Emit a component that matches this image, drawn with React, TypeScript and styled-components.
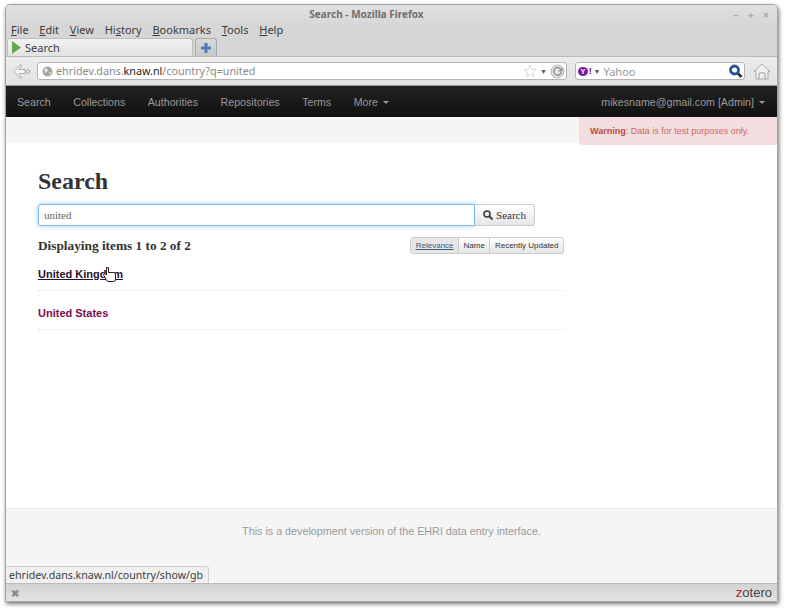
import { FC } from "react";
import styled, { createGlobalStyle } from "styled-components";

const GlobalStyle = createGlobalStyle`
  html, body {
    margin: 0;
    padding: 0;
    background: #fff;
    overflow: hidden;
  }
`;

const Page = styled.div`
  width: 785px;
  height: 610px;
  padding: 4px 0 0 5px;
  box-sizing: border-box;
`;

const Window = styled.div`
  width: 773px;
  height: 598px;
  box-sizing: border-box;
  display: flex;
  flex-direction: column;
  position: relative;
  background: #d6d6d6;
  border: 1px solid #a4a4a4;
  border-radius: 5px 5px 0 0;
  box-shadow: 1px 2px 4px rgba(0, 0, 0, 0.55);
  font-family: "Noto Sans", "Open Sans", sans-serif;
`;

const TitleBar = styled.div`
  height: 18px;
  flex: none;
  display: flex;
  align-items: center;
  justify-content: center;
  padding-right: 50px;
  position: relative;
  background: linear-gradient(#e0e0e0, #d8d8d8);
  border-radius: 4px 4px 0 0;
  color: #6f6f6f;
  font-size: 10px;
  font-weight: 700;
`;

const WindowControls = styled.div`
  position: absolute;
  right: 8px;
  top: 2px;
  display: flex;
  gap: 9px;
  color: #a9a9a9;
  font-size: 11px;
  font-weight: 700;
`;

const MenuBar = styled.div`
  height: 15px;
  flex: none;
  display: flex;
  align-items: center;
  gap: 10.75px;
  padding: 0 0 2px 5px;
  box-sizing: border-box;
  color: #3c3c3c;
  font-size: 11px;
  u {
    text-decoration-thickness: 1px;
  }
`;

const TabStrip = styled.div`
  height: 19px;
  flex: none;
  display: flex;
  align-items: flex-end;
  gap: 2px;
  padding-left: 1px;
  border-bottom: 1px solid #b9b9b9;
  box-sizing: border-box;
`;

const Tab = styled.div`
  width: 186px;
  height: 18px;
  box-sizing: border-box;
  display: flex;
  align-items: center;
  gap: 4px;
  padding-left: 4px;
  background: linear-gradient(#f2f2f2, #e2e2e2);
  border: 1px solid #bdbdbd;
  border-bottom: none;
  border-radius: 3px 3px 0 0;
  color: #3c3c3c;
  font-size: 11px;
`;

const NewTab = styled.div`
  width: 22px;
  height: 18px;
  box-sizing: border-box;
  display: flex;
  align-items: center;
  justify-content: center;
  background: linear-gradient(#d9d9d9, #c8c8c8);
  border: 1px solid #aaa;
  border-bottom: none;
  border-radius: 3px 3px 0 0;
`;

const ToolBar = styled.div`
  height: 29px;
  flex: none;
  display: flex;
  align-items: center;
  background: linear-gradient(#ececec, #e2e2e2);
  border-bottom: 1px solid #9a9a9a;
  box-sizing: border-box;
`;

const BackButton = styled.div`
  width: 31px;
  flex: none;
  display: flex;
  justify-content: center;
`;

const UrlBar = styled.div`
  width: 530px;
  height: 18px;
  flex: none;
  box-sizing: border-box;
  display: flex;
  align-items: center;
  gap: 3px;
  padding: 0 1px 0 4px;
  background: #fff;
  border: 1px solid #b4b4b4;
  border-radius: 3px;
  color: #8a8a8a;
  font-size: 10.75px;
  b {
    color: #222;
    font-weight: 400;
  }
`;

const UrlText = styled.span`
  flex: 1;
`;

const SearchBar = styled(UrlBar)`
  width: 170px;
  margin-left: 8px;
  padding-left: 2px;
  gap: 2px;
`;

const YahooMark = styled.span`
  display: inline-flex;
  align-items: center;
  color: #7a1a9e;
  font-size: 9px;
  line-height: 10px;
  font-weight: 700;
`;

const YahooOval = styled.span`
  display: inline-flex;
  justify-content: center;
  width: 10px;
  height: 9px;
  margin-right: 1px;
  line-height: 9px;
  font-size: 7px;
  border-radius: 50%;
  background: #7a1a9e;
  color: #fff;
`;

const DropArrow = styled.span`
  color: #555;
  font-size: 7px;
`;

const YahooLabel = styled(UrlText)`
  margin-left: 1px;
  font-size: 11px;
  color: #999;
`;

const HomeButton = styled.div`
  flex: 1;
  display: flex;
  justify-content: center;
  padding-left: 2px;
`;

const Nav = styled.nav`
  height: 31px;
  flex: none;
  display: flex;
  align-items: center;
  justify-content: space-between;
  padding: 0 12px 0 11px;
  background: linear-gradient(#222, #111);
  font-family: "Liberation Sans", Arial, sans-serif;
  font-size: 10.65px;
  color: #999;
`;

const NavLinks = styled.div`
  display: flex;
  gap: 22.5px;
`;

const Caret = styled.span`
  display: inline-block;
  margin-left: 5px;
  vertical-align: 2px;
  border-top: 3px solid #999;
  border-left: 3px solid transparent;
  border-right: 3px solid transparent;
`;

const Viewport = styled.div`
  flex: 1;
  min-height: 0;
  display: flex;
  flex-direction: column;
  position: relative;
  background: #fff;
`;

const SubBar = styled.div`
  height: 26px;
  flex: none;
  background: #f5f5f5;
`;

const Warning = styled.div`
  position: absolute;
  top: 0;
  right: 0;
  width: 198px;
  height: 28px;
  box-sizing: border-box;
  padding-left: 11px;
  display: flex;
  align-items: center;
  white-space: pre;
  background: #f2dede;
  border-radius: 0 0 0 4px;
  color: #c66;
  font-family: "Liberation Sans", Arial, sans-serif;
  font-size: 9px;
  b {
    color: #b94a48;
  }
`;

const Content = styled.main`
  flex: 1;
  padding: 24px 0 0 32px;
  width: 526px;
`;

const Heading = styled.h1`
  margin: 0;
  font-family: "Liberation Serif", "Times New Roman", serif;
  font-size: 24px;
  line-height: 28px;
  font-weight: 700;
  color: #333;
`;

const SearchForm = styled.form`
  display: flex;
  margin-top: 9px;
`;

const QueryInput = styled.div`
  width: 437px;
  height: 22px;
  box-sizing: border-box;
  padding: 0 0 1px 5px;
  display: flex;
  align-items: center;
  border: 1px solid #7fb8e8;
  border-radius: 3px 0 0 3px;
  box-shadow: 0 0 5px rgba(82, 168, 236, 0.6);
  font-family: "Liberation Serif", serif;
  font-size: 11px;
  color: #666;
`;

const SearchButton = styled.div`
  width: 60px;
  height: 22px;
  box-sizing: border-box;
  display: flex;
  align-items: center;
  justify-content: center;
  gap: 3px;
  background: linear-gradient(#fff, #e6e6e6);
  border: 1px solid #ccc;
  border-left: none;
  border-radius: 0 3px 3px 0;
  font-family: "Liberation Serif", serif;
  font-size: 11px;
  color: #333;
`;

const ResultsHeader = styled.div`
  display: flex;
  align-items: center;
  justify-content: space-between;
  margin-top: 11px;
`;

const Count = styled.h3`
  margin: 0;
  font-family: "Liberation Serif", serif;
  font-size: 13.3px;
  font-weight: 700;
  color: #333;
`;

const SortGroup = styled.div`
  display: flex;
  height: 17px;
  box-sizing: border-box;
  border: 1px solid #ccc;
  border-radius: 3px;
  background: linear-gradient(#fff, #e6e6e6);
  font-family: "Liberation Sans", Arial, sans-serif;
  font-size: 8px;
  color: #333;
`;

const SortItem = styled.span<{ $active?: boolean }>`
  display: flex;
  align-items: center;
  padding: 0 4.5px;
  border-left: 1px solid #ccc;
  text-decoration: ${(p) => (p.$active ? "underline" : "none")};
  background: ${(p) => (p.$active ? "#e6e6e6" : "transparent")};
  color: ${(p) => (p.$active ? "#3a5a78" : "#333")};
  &:first-child {
    border-left: none;
  }
`;

const ResultList = styled.ul`
  list-style: none;
  margin: 14px 0 0;
  padding: 0;
  display: flex;
  flex-direction: column;
  gap: 16px;
`;

const ResultItem = styled.li`
  padding-bottom: 9px;
  border-bottom: 1px dotted #e4e4e4;
`;

const ResultLink = styled.a<{ $hover?: boolean }>`
  display: block;
  width: fit-content;
  font-family: "Liberation Sans", Arial, sans-serif;
  font-size: 11px;
  font-weight: 700;
  line-height: 13px;
  position: relative;
  color: ${(p) => (p.$hover ? "#2a1030" : "#7d0b4e")};
  text-decoration: ${(p) => (p.$hover ? "underline" : "none")};
`;

const Cursor = styled.svg`
  position: absolute;
  left: 65px;
  top: -1px;
`;

const Footer = styled.footer`
  height: 75px;
  flex: none;
  display: flex;
  justify-content: center;
  padding-top: 16px;
  box-sizing: border-box;
  background: #f5f5f5;
  border-top: 1px solid #e8e8e8;
  font-family: "Liberation Sans", Arial, sans-serif;
  font-size: 10.75px;
  color: #999;
`;

const StatusTip = styled.div`
  position: absolute;
  left: 0;
  bottom: 0;
  height: 17px;
  box-sizing: border-box;
  padding: 0 5px 0 3px;
  display: flex;
  align-items: center;
  background: #f0f0f0;
  border: 1px solid #d0d0d0;
  border-left: none;
  border-bottom: none;
  border-radius: 0 3px 0 0;
  font-size: 10.6px;
  color: #3c3c3c;
`;

const AddonBar = styled.div`
  height: 18px;
  flex: none;
  display: flex;
  align-items: center;
  justify-content: space-between;
  padding: 0 5px;
  box-sizing: border-box;
  background: linear-gradient(#d2d2d2, #e4e4e4);
  border-top: 1px solid #bbb;
`;

const CloseMark = styled.span`
  color: #8c8c8c;
  font-size: 10px;
  font-weight: 700;
`;

const Zotero = styled.span`
  font-family: "Liberation Sans", Arial, sans-serif;
  font-size: 13px;
  line-height: 14px;
  color: #444;
  i {
    color: #b3262e;
    font-style: normal;
  }
`;

const MENUS: [string, string, string][] = [
  ["", "F", "ile"],
  ["", "E", "dit"],
  ["", "V", "iew"],
  ["Hi", "s", "tory"],
  ["", "B", "ookmarks"],
  ["", "T", "ools"],
  ["", "H", "elp"],
];

const NAV_ITEMS = ["Search", "Collections", "Authorities", "Repositories", "Terms"];

const App: FC = () => {
  return (
    <Page>
      <GlobalStyle />
      <Window>
        <TitleBar>
          Search - Mozilla Firefox
          <WindowControls>
            <span>–</span>
            <span>+</span>
            <span>×</span>
          </WindowControls>
        </TitleBar>
        <MenuBar>
          {MENUS.map(([a, k, b]) => (
            <span key={k + b}>
              {a}
              <u>{k}</u>
              {b}
            </span>
          ))}
        </MenuBar>
        <TabStrip>
          <Tab>
            <svg width="9" height="13" viewBox="0 0 9 13">
              <path d="M0 0 L9 6.5 L0 13 Z" fill="#5faa4a" />
            </svg>
            Search
          </Tab>
          <NewTab>
            <svg width="10" height="10" viewBox="0 0 10 10">
              <path d="M3.500 0h3v3.500H10v3H6.500V10h-3V6.500H0v-3h3.500z" fill="#4a7db5" />
            </svg>
          </NewTab>
        </TabStrip>
        <ToolBar>
          <BackButton>
            <svg width="18" height="15" viewBox="0 0 18 15">
              <path d="M7 1 L1 7.500 L7 14 L9 14 L6 9.500 L12 9.500 L12 5.500 L6 5.500 L9 1 Z" fill="#f2f2f2" stroke="#b0b0b0" />
              <circle cx="15" cy="7.500" r="1.800" fill="none" stroke="#aaa" />
            </svg>
          </BackButton>
          <UrlBar>
            <svg width="11" height="11" viewBox="0 0 11 11">
              <circle cx="5.500" cy="5.500" r="5" fill="#a6a6a6" />
              <path d="M2 3 L5 2 L6 5 L3 7 Z M7 6 L9 6 L8 9 Z" fill="#e0e0e0" />
            </svg>
            <UrlText>
              ehridev.dans.<b>knaw.nl</b>/country?q=united
            </UrlText>
            <svg width="14" height="14" viewBox="0 0 24 24">
              <path d="M12 2l3 7h7l-5.500 5 2 8L12 18l-6.500 4 2-8L2 9h7z" fill="none" stroke="#cfcfcf" strokeWidth="1.500" />
            </svg>
            <DropArrow>▼</DropArrow>
            <svg width="15" height="15" viewBox="0 0 15 15">
              <circle cx="7.500" cy="7.500" r="6.500" fill="#e6e6e6" stroke="#b5b5b5" />
              <path d="M10.500 5A3.800 3.800 0 1 0 11.300 8" fill="none" stroke="#8f8f8f" strokeWidth="1.500" />
              <path d="M8 7.500h4.500V3z" fill="#8f8f8f" />
            </svg>
          </UrlBar>
          <SearchBar>
            <YahooMark>
              <YahooOval>Y</YahooOval>!
            </YahooMark>
            <DropArrow>▼</DropArrow>
            <YahooLabel>Yahoo</YahooLabel>
            <svg width="15" height="15" viewBox="0 0 15 15">
              <circle cx="6.500" cy="6" r="4" fill="#fff" stroke="#23529b" strokeWidth="2.800" />
              <path d="M10 9.500l3.500 3.500" stroke="#333" strokeWidth="2.800" />
            </svg>
          </SearchBar>
          <HomeButton>
            <svg width="18" height="17" viewBox="0 0 18 17">
              <path d="M1 8.500 L9 1 L17 8.500 L15 8.500 L15 16 L3 16 L3 8.500 Z" fill="#f0f0f0" stroke="#a8a8a8" />
              <path d="M6 16 V10.500 Q9 8.500 12 10.500 V16" fill="none" stroke="#a0a0a0" />
            </svg>
          </HomeButton>
        </ToolBar>
        <Nav>
          <NavLinks>
            {NAV_ITEMS.map((n) => (
              <span key={n}>{n}</span>
            ))}
            <span>
              More
              <Caret />
            </span>
          </NavLinks>
          <span>
            mikesname@gmail.com [Admin]
            <Caret />
          </span>
        </Nav>
        <Viewport>
          <SubBar />
          <Warning>
            <b>Warning</b>: Data is for test purposes only.
          </Warning>
          <Content>
            <Heading>Search</Heading>
            <SearchForm>
              <QueryInput>united</QueryInput>
              <SearchButton>
                <svg width="10" height="10" viewBox="0 0 10 10">
                  <circle cx="4" cy="4" r="3" fill="none" stroke="#333" strokeWidth="1.500" />
                  <path d="M6 6l3.500 3.500" stroke="#333" strokeWidth="1.800" />
                </svg>
                Search
              </SearchButton>
            </SearchForm>
            <ResultsHeader>
              <Count>Displaying items 1 to 2 of 2</Count>
              <SortGroup>
                <SortItem $active>Relevance</SortItem>
                <SortItem>Name</SortItem>
                <SortItem>Recently Updated</SortItem>
              </SortGroup>
            </ResultsHeader>
            <ResultList>
              <ResultItem>
                <ResultLink $hover>
                  United Kingdom
                  <Cursor width="13" height="16" viewBox="0 0 13 16">
                    <path d="M3.500 0.500 h2 v5 h5 q2 0 2 1.500 v5.500 q0 2 -2 2 h-5.500 q-1 0 -2 -2 l-2.500 -5 q0 -1.500 2 -0.500 l1 1 z" fill="#fff" stroke="#222" />
                  </Cursor>
                </ResultLink>
              </ResultItem>
              <ResultItem>
                <ResultLink>United States</ResultLink>
              </ResultItem>
            </ResultList>
          </Content>
          <Footer>This is a development version of the EHRI data entry interface.</Footer>
          <StatusTip>ehridev.dans.knaw.nl/country/show/gb</StatusTip>
        </Viewport>
        <AddonBar>
          <CloseMark>✖</CloseMark>
          <Zotero>
            <i>z</i>otero
          </Zotero>
        </AddonBar>
      </Window>
    </Page>
  );
};

export default App;
